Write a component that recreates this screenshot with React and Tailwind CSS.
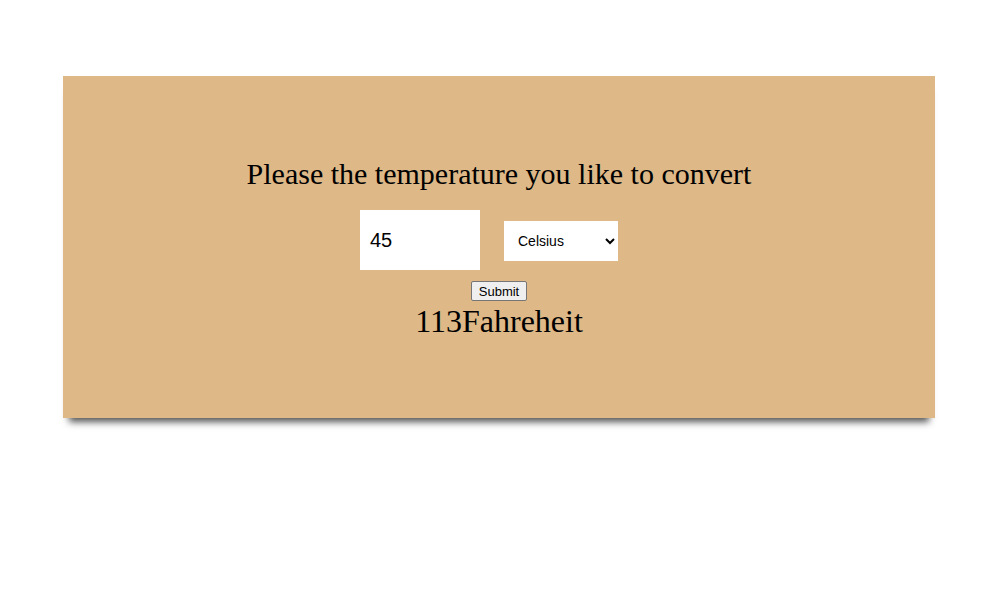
export default function App() {
  return (
    <div className="w-[990px] h-[613px] bg-white pt-[76px]">
      <div className="ml-[63px] w-[872px] h-[342px] bg-[#deb887] shadow-[0px_10px_7px_-6px_#555555] flex flex-col items-center pt-[80px] font-['Liberation_Serif',serif] text-black">
        <h1 className="text-[30px] leading-[36px]">Please the temperature you like to convert</h1>
        <div className="mt-[18px] flex items-center">
          <input
            type="text"
            defaultValue="45"
            className="w-[120px] h-[60px] bg-white px-[10px] text-[20px] font-['Liberation_Sans',sans-serif] outline-none"
          />
          <select className="ml-[24px] mr-[20px] mt-[2px] w-[114px] h-[40px] bg-white pl-[10px] pr-[2px] text-[14px] font-['Liberation_Sans',sans-serif] appearance-auto">
            <option>Celsius</option>
            <option>Fahrenheit</option>
          </select>
        </div>
        <button className="mt-[11px] h-[20px] px-[7px] text-[13px] leading-none font-['Liberation_Sans',sans-serif] bg-[#efefef] border border-[#767676] rounded-[2px]">
          Submit
        </button>
        <p className="mt-[2px] text-[32px] leading-[36px]">113Fahreheit</p>
      </div>
    </div>
  )
}
